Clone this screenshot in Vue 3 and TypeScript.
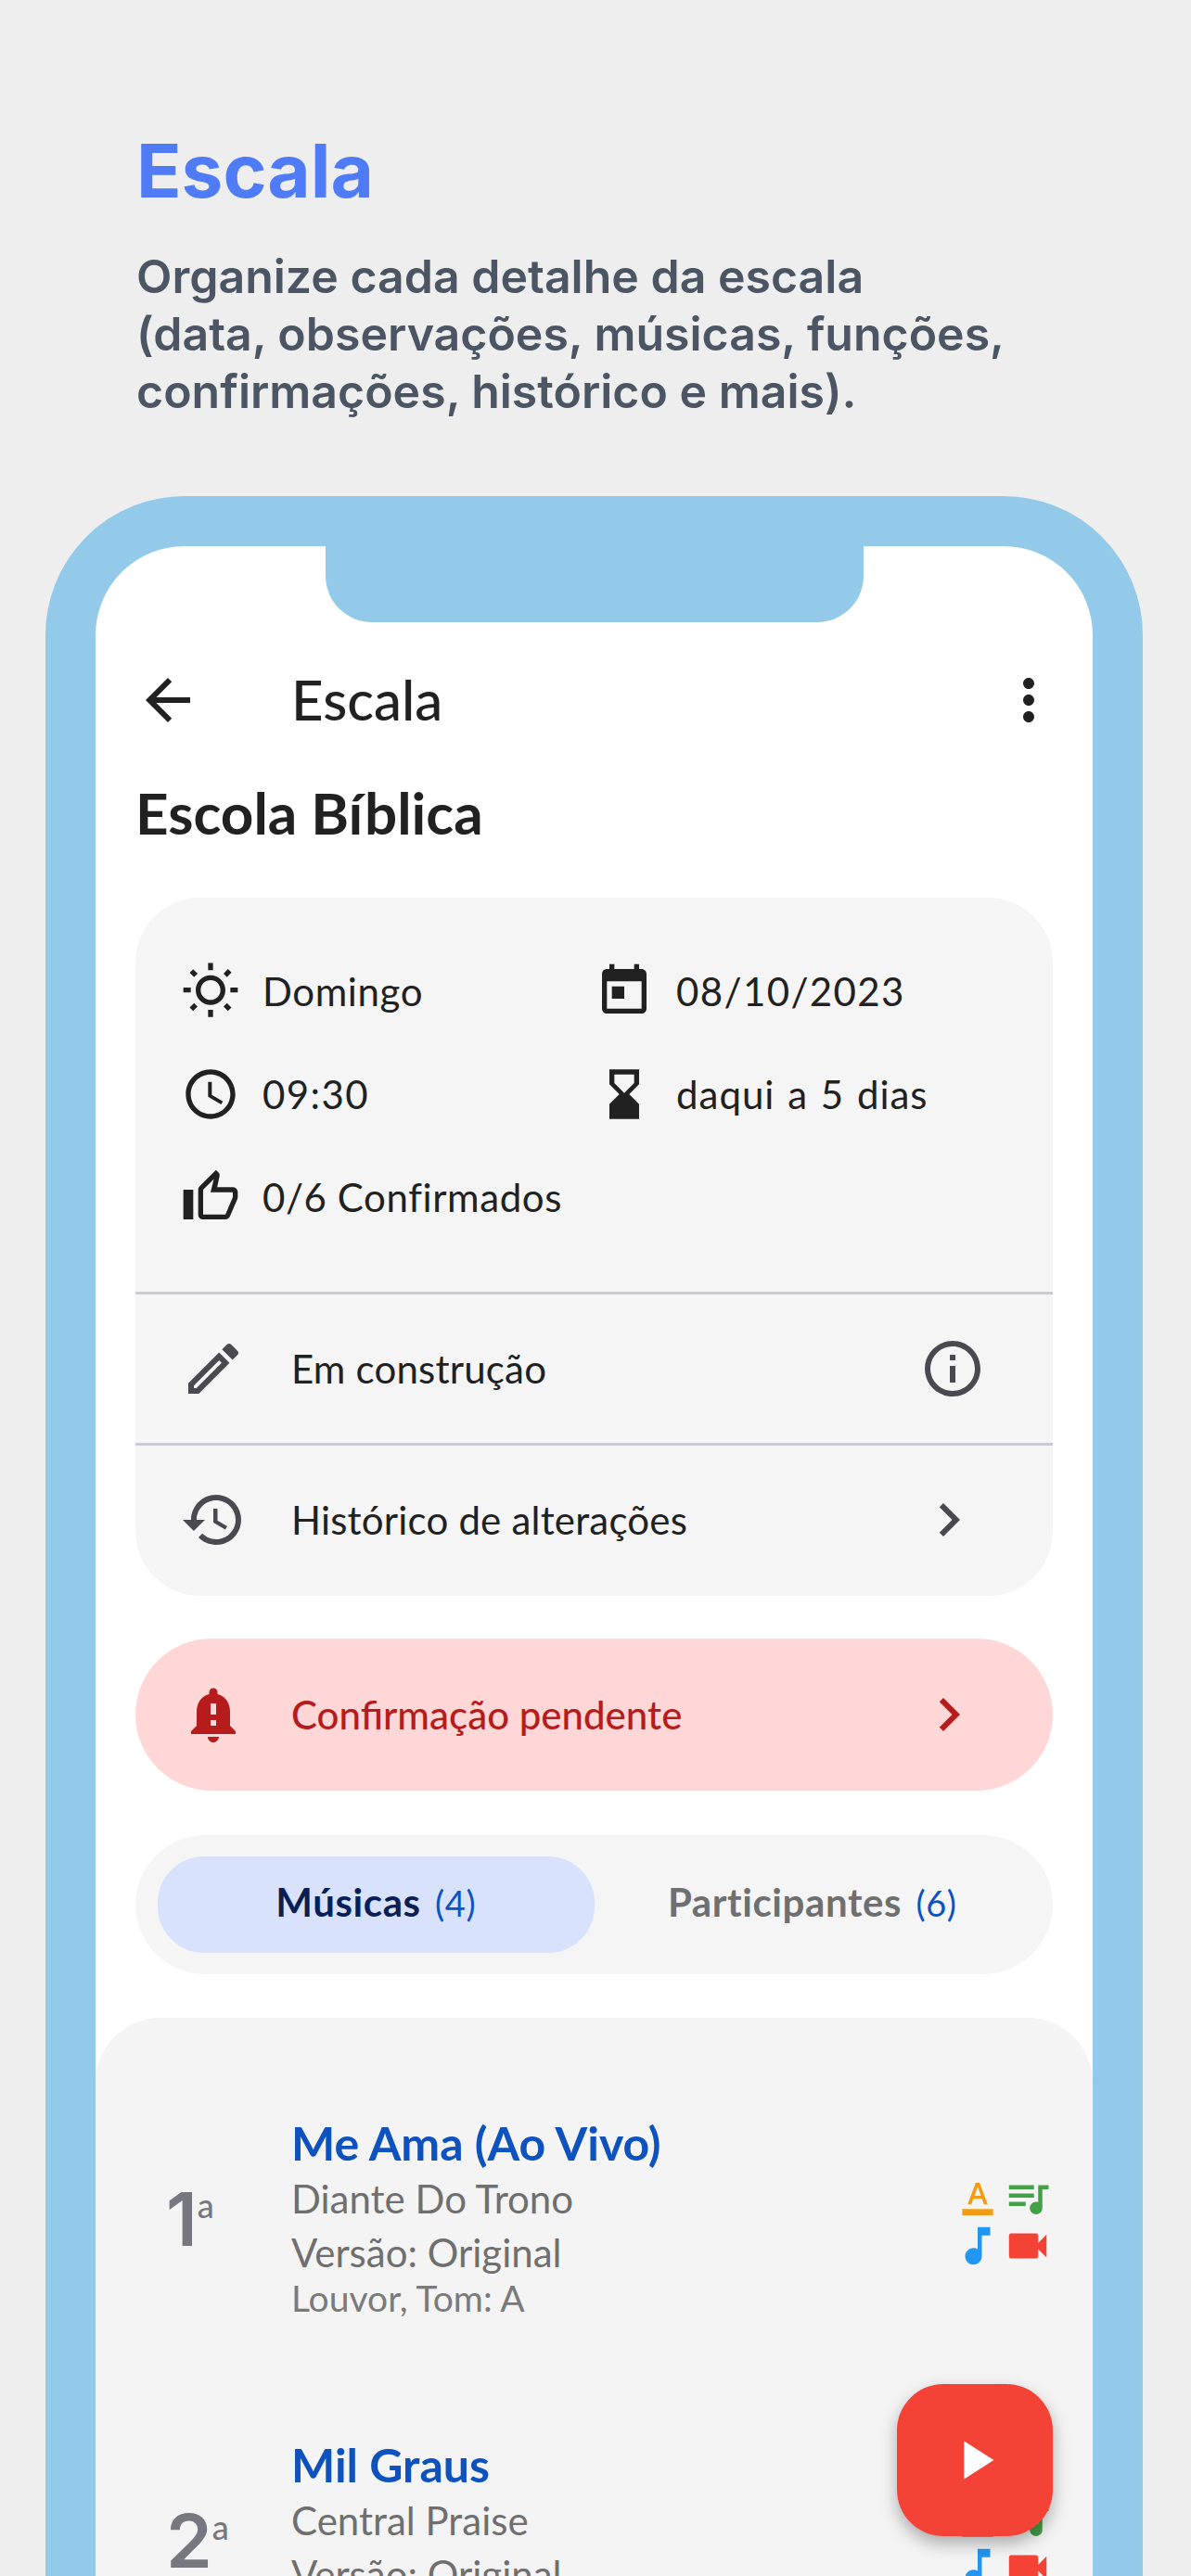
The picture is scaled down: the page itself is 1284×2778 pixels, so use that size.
<script setup lang="ts">
type Song = { pos: number; title: string; artist: string; version: string; note: string }

const songs: Song[] = [
  { pos: 1, title: "Me Ama (Ao Vivo)", artist: "Diante Do Trono", version: "Versão: Original", note: "Louvor, Tom: A" },
  { pos: 2, title: "Mil Graus", artist: "Central Praise", version: "Versão: Original", note: "Louvor, Tom: G" },
]

const icons = {
  back: "M20 11H7.83l5.59-5.59L12 4l-8 8 8 8 1.41-1.41L7.83 13H20v-2z",
  more: "M12 8c1.1 0 2-.9 2-2s-.9-2-2-2-2 .9-2 2 .9 2 2 2zm0 2c-1.1 0-2 .9-2 2s.9 2 2 2 2-.9 2-2-.9-2-2-2zm0 6c-1.1 0-2 .9-2 2s.9 2 2 2 2-.9 2-2-.9-2-2-2z",
  sun: "M6.76 4.84l-1.8-1.79-1.41 1.41 1.79 1.79zM1 10.5h3v2H1zM11 .55h2V3.5h-2zm8.04 2.495l1.408 1.407-1.79 1.79-1.407-1.408zm-1.8 15.115l1.79 1.8 1.41-1.41-1.8-1.79zM20 10.5h3v2h-3zm-8-5c-3.31 0-6 2.69-6 6s2.69 6 6 6 6-2.69 6-6-2.69-6-6-6zm0 10c-2.21 0-4-1.79-4-4s1.79-4 4-4 4 1.79 4 4-1.79 4-4 4zm-1 4h2v2.95h-2zm-7.45-.96l1.41 1.41 1.79-1.8-1.41-1.41z",
  today: "M19 3h-1V1h-2v2H8V1H6v2H5c-1.11 0-1.99.9-1.99 2L3 19c0 1.1.89 2 2 2h14c1.1 0 2-.9 2-2V5c0-1.1-.9-2-2-2zm0 16H5V8h14v11zM7 10h5v5H7z",
  clock: "M11.99 2C6.47 2 2 6.48 2 12s4.47 10 9.99 10C17.52 22 22 17.52 22 12S17.52 2 11.99 2zM12 20c-4.42 0-8-3.58-8-8s3.58-8 8-8 8 3.58 8 8-3.58 8-8 8zm.5-13H11v6l5.25 3.15.75-1.23-4.5-2.67z",
  hourglass: "M18 22l-.01-6L14 12l3.99-4.01L18 2H6v6l4 4-4 3.99V22h12zM8 7.5V4h8v3.5l-4 4-4-4z",
  thumb: "M9 21h9c.83 0 1.54-.5 1.84-1.22l3.02-7.05c.09-.23.14-.47.14-.73v-2c0-1.1-.9-2-2-2h-6.31l.95-4.57.03-.32c0-.41-.17-.79-.44-1.06L14.17 1 7.58 7.59C7.22 7.95 7 8.45 7 9v10c0 1.1.9 2 2 2zM9 9l4.34-4.34L12 10h9v2l-3 7H9V9zM1 9h4v12H1z",
  edit: "M3 17.25V21h3.75L17.81 9.94l-3.75-3.75L3 17.25zM5.92 19H5v-.92l9.06-9.06.92.92L5.92 19zM20.71 5.63l-2.34-2.34c-.2-.2-.45-.29-.71-.29s-.51.1-.7.29l-1.83 1.83 3.75 3.75 1.83-1.83c.39-.39.39-1.02 0-1.41z",
  info: "M11 7h2v2h-2zm0 4h2v6h-2zm1-9C6.48 2 2 6.48 2 12s4.48 10 10 10 10-4.48 10-10S17.52 2 12 2zm0 18c-4.41 0-8-3.59-8-8s3.59-8 8-8 8 3.59 8 8-3.59 8-8 8z",
  history: "M13 3c-4.97 0-9 4.03-9 9H1l3.89 3.89.07.14L9 12H6c0-3.87 3.13-7 7-7s7 3.13 7 7-3.13 7-7 7c-1.93 0-3.68-.79-4.94-2.06l-1.42 1.42C8.27 19.99 10.51 21 13 21c4.97 0 9-4.03 9-9s-4.03-9-9-9zm-1 5v5l4.28 2.54.72-1.21-3.5-2.08V8H12z",
  chevron: "M10 6L8.59 7.41 13.17 12l-4.58 4.59L10 18l6-6z",
  bell: "M12 22c1.1 0 2-.9 2-2h-4c0 1.1.9 2 2 2zm6-6v-5c0-3.07-1.63-5.64-4.5-6.32V4c0-.83-.67-1.5-1.5-1.5s-1.5.67-1.5 1.5v.68C7.64 5.36 6 7.92 6 11v5l-2 2v1h16v-1l-2-2zm-5 0h-2v-2h2v2zm0-4h-2V8h2v4z",
  key: "M2 20h20v4H2v-4zm3.49-3h2.42l1.27-3.58h5.65L16.09 17h2.42L13.25 3h-2.5L5.49 17zm4.42-5.61 2.03-5.79h.12l2.03 5.79H9.91z",
  queue: "M15 6H3v2h12V6zm0 4H3v2h12v-2zM3 16h8v-2H3v2zM17 6v8.18c-.31-.11-.65-.18-1-.18-1.66 0-3 1.34-3 3s1.34 3 3 3 3-1.34 3-3V8h3V6h-5z",
  note: "M12 3v10.55c-.59-.34-1.27-.55-2-.55-2.21 0-4 1.79-4 4s1.79 4 4 4 4-1.79 4-4V7h4V3h-6z",
  video: "M17 10.5V7c0-.55-.45-1-1-1H4c-.55 0-1 .45-1 1v10c0 .55.45 1 1 1h12c.55 0 1-.45 1-1v-3.5l4 4v-11l-4 4z",
  play: "M8 5v14l11-7z",
}
</script>

<template>
  <div class="page">
    <header class="intro">
      <h1>Escala</h1>
      <p>Organize cada detalhe da escala<br />(data, observações, músicas, funções,<br />confirmações, histórico e mais).</p>
    </header>

    <div class="phone">
      <div class="notch"></div>
      <div class="screen">
        <div class="appbar">
          <svg class="ic back" viewBox="0 0 24 24"><path :d="icons.back" /></svg>
          <span class="appbar-title">Escala</span>
          <svg class="ic more" viewBox="0 0 24 24"><path :d="icons.more" /></svg>
        </div>
        <h2 class="event-name">Escola Bíblica</h2>

        <section class="card">
          <div class="facts">
            <div class="fact"><svg class="ic" viewBox="0 0 24 24"><path :d="icons.sun" /></svg>Domingo</div>
            <div class="fact"><svg class="ic" viewBox="0 0 24 24"><path :d="icons.today" /></svg><span class="digits">08/10/2023</span></div>
            <div class="fact"><svg class="ic" viewBox="0 0 24 24"><path :d="icons.clock" /></svg><span class="digits">09:30</span></div>
            <div class="fact"><svg class="ic" viewBox="0 0 24 24"><path :d="icons.hourglass" /></svg><span class="wider">daqui a 5 dias</span></div>
            <div class="fact wide"><svg class="ic" viewBox="0 0 24 24"><path :d="icons.thumb" /></svg>0/6 Confirmados</div>
          </div>
          <div class="line">
            <svg class="ic soft" viewBox="0 0 24 24"><path :d="icons.edit" /></svg>
            <span>Em construção</span>
            <svg class="ic soft end" viewBox="0 0 24 24"><path :d="icons.info" /></svg>
          </div>
          <div class="line">
            <svg class="ic soft" viewBox="0 0 24 24"><path :d="icons.history" /></svg>
            <span>Histórico de alterações</span>
            <svg class="ic soft end chev" viewBox="0 0 24 24"><path :d="icons.chevron" /></svg>
          </div>
        </section>

        <div class="pending">
          <svg class="ic" viewBox="0 0 24 24"><path :d="icons.bell" /></svg>
          <span>Confirmação pendente</span>
          <svg class="ic end chev" viewBox="0 0 24 24"><path :d="icons.chevron" /></svg>
        </div>

        <div class="tabs">
          <div class="tab active"><b>Músicas</b> <span>(4)</span></div>
          <div class="tab"><b>Participantes</b> <span>(6)</span></div>
        </div>

        <section class="songs">
          <article v-for="song in songs" :key="song.pos" class="song">
            <div class="pos">{{ song.pos }}<sup>a</sup></div>
            <div class="info">
              <div class="song-title">{{ song.title }}</div>
              <div class="song-artist">{{ song.artist }}</div>
              <div class="song-artist">{{ song.version }}</div>
              <div class="song-note">{{ song.note }}</div>
            </div>
            <div class="badges">
              <svg class="orange" viewBox="0 0 24 24"><path :d="icons.key" /></svg>
              <svg class="green" viewBox="0 0 24 24"><path :d="icons.queue" /></svg>
              <svg class="blue" viewBox="0 0 24 24"><path :d="icons.note" /></svg>
              <svg class="red" viewBox="0 0 24 24"><path :d="icons.video" /></svg>
            </div>
          </article>
        </section>
      </div>
    </div>

    <button class="fab" type="button">
      <svg viewBox="0 0 24 24"><path :d="icons.play" /></svg>
    </button>
  </div>
</template>

<style>
html, body {
  margin: 0;
  background: #eeeeee;
}
</style>

<style scoped>
.page {
  position: relative;
  width: 1284px;
  height: 2778px;
  overflow: hidden;
  background: #eeeeee;
  font-family: Lato, "Noto Sans", sans-serif;
  color: #212121;
}

.intro {
  padding: 134px 0 0 147px;
  height: 535px;
  box-sizing: border-box;
  font-family: Inter, sans-serif;
}
.intro h1 {
  margin: 0;
  font-size: 80px;
  line-height: 100px;
  font-weight: 700;
  color: #4f7cf6;
}
.intro p {
  margin: 33px 0 0;
  font-size: 50px;
  line-height: 62px;
  font-weight: 600;
  color: #4b5563;
}

.phone {
  position: relative;
  box-sizing: border-box;
  width: 1183px;
  height: 2400px;
  margin-left: 49px;
  border: 54px solid #93caea;
  border-radius: 150px;
  background: #ffffff;
}
.notch {
  position: absolute;
  top: -1px;
  left: 248px;
  width: 580px;
  height: 83px;
  background: #93caea;
  border-radius: 0 0 50px 50px;
}
.screen {
  padding: 0 43px;
}

.ic {
  flex: none;
  width: 64px;
  height: 64px;
  fill: #212121;
}
.ic.soft {
  fill: #49494f;
}
.end {
  margin-left: auto;
}
.chev {
  margin-right: 4px;
}

.appbar {
  display: flex;
  align-items: center;
  height: 72px;
  padding-top: 130px;
}
.appbar .ic {
  width: 72px;
  height: 72px;
}
.back {
  margin-left: -1px;
}
.appbar-title {
  margin-left: 97px;
  margin-top: -2px;
  font-size: 60px;
  font-weight: 500;
}
.more {
  margin-left: auto;
  margin-right: -10px;
}
.event-name {
  margin: 43px 0 0;
  font-size: 62px;
  line-height: 84px;
  font-weight: 700;
}

.card {
  margin-top: 50px;
  height: 753px;
  border-radius: 70px;
  background: #f5f5f5;
  overflow: hidden;
}
.facts {
  display: grid;
  grid-template-columns: 446px 1fr;
  grid-auto-rows: 111px;
  height: 425px;
  box-sizing: border-box;
  padding: 45px 0 0 49px;
}
.fact {
  display: flex;
  align-items: center;
  gap: 24px;
  font-size: 42px;
  letter-spacing: 0.6px;
}
.digits {
  letter-spacing: 1.4px;
}
.wider {
  letter-spacing: 1px;
  word-spacing: 2px;
}
.wide {
  grid-column: 1 / 3;
}
.line {
  display: flex;
  align-items: center;
  height: 163px;
  padding: 0 72px 0 48px;
  gap: 48px;
  border-top: 3px solid #c9c9d8;
  font-size: 42px;
  letter-spacing: 0.2px;
  box-sizing: border-box;
}
.line .ic,
.pending .ic {
  width: 72px;
  height: 72px;
}

.pending {
  display: flex;
  align-items: center;
  gap: 48px;
  height: 164px;
  margin-top: 46px;
  padding: 0 72px 0 48px;
  border-radius: 82px;
  background: #ffd7d7;
  color: #b71c1c;
  font-size: 42px;
  font-weight: 500;
}
.pending .ic {
  fill: #b71c1c;
}

.tabs {
  display: flex;
  align-items: center;
  height: 150px;
  margin-top: 48px;
  padding: 0 24px;
  border-radius: 75px;
  background: #f5f5f5;
  box-sizing: border-box;
}
.tab {
  flex: 1;
  height: 104px;
  line-height: 98px;
  text-align: center;
  font-size: 42px;
  letter-spacing: 0.6px;
  word-spacing: 4px;
  border-radius: 50px;
  color: #6f6f6f;
}
.tab span {
  color: #0d52bf;
  font-size: 38px;
}
.tab.active {
  background: #d8e2fd;
  color: #0a1f55;
}

.songs {
  margin: 47px -43px 0;
  padding-top: 104px;
  border-radius: 70px 70px 0 0;
  background: #f4f4f4;
}
.song {
  display: flex;
  height: 347px;
  padding-left: 76px;
  padding-right: 43px;
}
.pos {
  width: 135px;
  padding-top: 68px;
  font-family: Inter, sans-serif;
  font-size: 80px;
  font-weight: 600;
  line-height: 90px;
  color: #77787f;
}
.pos sup {
  font-family: Lato, sans-serif;
  font-size: 36px;
  font-weight: 500;
  line-height: 0;
  vertical-align: 30px;
}
.song-title {
  font-size: 50px;
  line-height: 62px;
  font-weight: 700;
  color: #0d52bf;
}
.song-artist {
  font-size: 42px;
  line-height: 58px;
  color: #6f6f6f;
}
.song-note {
  font-size: 39px;
  line-height: 40px;
  color: #7a7a7a;
}
.info {
  flex: 1;
}
.badges {
  display: grid;
  grid-template-columns: 54px 54px;
  grid-auto-rows: 52px;
  margin-top: 63px;
}
.badges svg {
  width: 54px;
  height: 54px;
}
.badges .orange {
  width: 40px;
  height: 40px;
  place-self: center;
}
.orange { fill: #f39c12; }
.green { fill: #43a047; }
.blue { fill: #2196f3; }
.red { fill: #f44336; }

.fab {
  position: absolute;
  left: 967px;
  top: 2571px;
  width: 168px;
  height: 164px;
  padding: 0;
  border: 0;
  border-radius: 50px;
  background: #f44336;
  box-shadow: 0 8px 18px rgba(0, 0, 0, 0.3);
  display: flex;
  align-items: center;
  justify-content: center;
}
.fab svg {
  width: 70px;
  height: 70px;
  fill: #ffffff;
}
</style>
